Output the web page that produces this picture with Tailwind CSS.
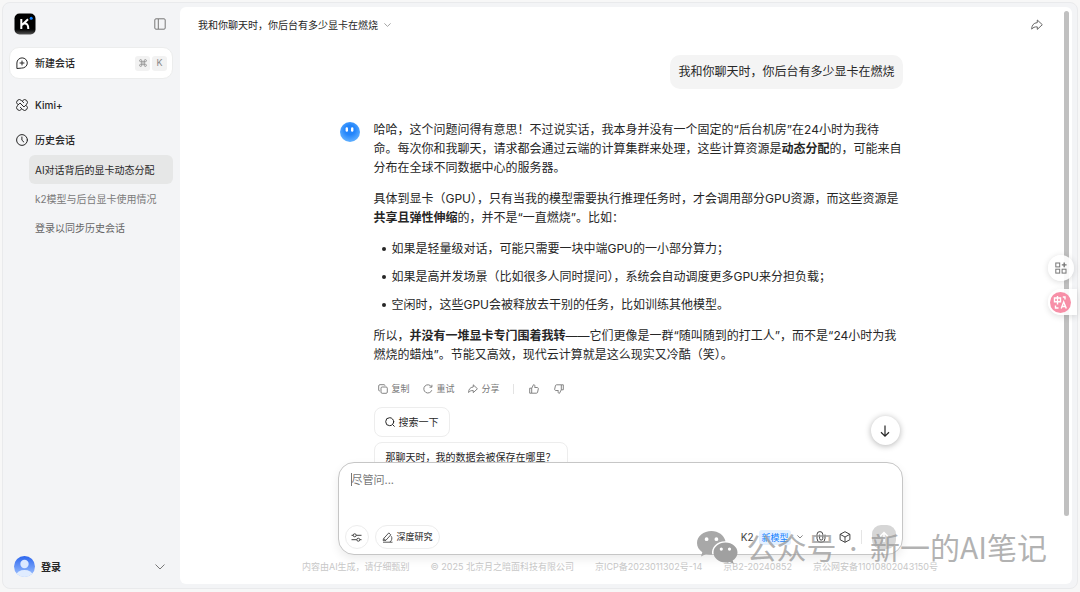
<!DOCTYPE html>
<html lang="zh-CN">
<head>
    <meta charset="UTF-8">
    <meta name="viewport" content="width=device-width, initial-scale=1.0">
    <title>Kimi</title>
    <script src="https://cdn.jsdelivr.net/npm/@tailwindcss/browser@4"></script>
</head>
<body class="h-screen overflow-hidden bg-[#f7f7f7] p-[2px] pb-[3px] font-['Inter','Noto_Sans_CJK_SC',sans-serif] text-[#262626]">
    <div class="relative flex h-full rounded-lg border border-[#e9eaec] bg-[#f3f4f6] pt-1 pb-1 pr-[5px]">

        <!-- Sidebar -->
        <aside class="flex w-[177px] shrink-0 flex-col pl-[6px] pr-[7px] pb-[7px] text-[10px] leading-4">
            <div class="flex items-center justify-between pl-[5px] pr-[7px] pt-[6px]">
                <a href="#" aria-label="Kimi">
                    <svg class="size-[22px]" viewBox="0 0 22 22">
                        <defs>
                            <linearGradient id="logo-bg" x1="0" y1="0" x2="0" y2="1"><stop offset="0.75" stop-color="#000"/><stop offset="1" stop-color="#555"/></linearGradient>
                        </defs>
                        <rect x="0.5" y="0.5" width="21" height="21" rx="5" fill="url(#logo-bg)"/>
                        <path d="M7.3 6v10M14 6.3L8 12M10 10.6c2.6-.4 4.3.8 4.3 5.4" fill="none" stroke="#fff" stroke-width="2"/>
                        <circle cx="17.2" cy="5.2" r="1.5" fill="#1783ff"/>
                    </svg>
                </a>
                <button aria-label="收起侧边栏">
                    <svg class="size-3 text-[#777]" viewBox="0 0 12 12" fill="none" stroke="currentColor"><rect x="0.8" y="0.8" width="10.4" height="10.4" rx="1.2"/><path d="M4.3 1v10"/></svg>
                </button>
            </div>

            <button class="mt-[12px] flex h-8 items-center rounded-[10px] border border-[#eceded] bg-white pl-[6px] pr-[5px] font-medium">
                <svg class="mr-[7px] size-3" viewBox="0 0 12 12" fill="none" stroke="currentColor" stroke-linecap="round" stroke-linejoin="round"><path d="M.9 11.1V6A5.2 5.1 0 1 1 6 11.1zM6 4v4M4 6h4"/></svg>
                新建会话
                <span class="ml-auto flex gap-[2px] text-[9px] font-normal text-[#888]">
                    <kbd class="flex h-[15px] w-[15px] items-center justify-center rounded-[3px] bg-[#f2f2f2]">
                        <svg class="size-2" viewBox="0 0 8 8" fill="none" stroke="currentColor" stroke-width="0.8"><path d="M2.8 2.8H1.7a1.1 1.1 0 1 1 1.1-1.1v4.6a1.1 1.1 0 1 1-1.1-1.1h4.6a1.1 1.1 0 1 1-1.1 1.1V1.7a1.1 1.1 0 1 1 1.1 1.1z"/></svg>
                    </kbd>
                    <kbd class="flex h-[15px] w-[15px] items-center justify-center rounded-[3px] bg-[#f2f2f2] font-['Inter',sans-serif]">K</kbd>
                </span>
            </button>

            <a href="#" class="mt-[18px] flex items-center pl-[7px] font-medium">
                <svg class="mr-[7px] size-3" viewBox="0 0 12 12" fill="none" stroke="currentColor" stroke-linecap="round" stroke-linejoin="round"><path d="M4.300 4.300L6 6M7.700 7.700L6 6M1.400 5.300A2.700 2.700 0 1 1 5.300 1.400L7.600 3.600M6.700 1.400A2.700 2.700 0 1 1 10.600 5.300L8.400 7.600M10.600 6.700A2.700 2.700 0 1 1 6.700 10.600L4.400 8.400M5.300 10.600A2.700 2.700 0 1 1 1.400 6.700L3.600 4.400"/></svg>
                Kimi+
            </a>
            <a href="#" class="mt-[19px] flex items-center pl-[7px] font-medium">
                <svg class="mr-[7px] size-3" viewBox="0 0 12 12" fill="none" stroke="currentColor" stroke-linecap="round" stroke-linejoin="round"><circle cx="6" cy="6" r="5.4"/><path d="M5.9 3v3.2L7.8 8"/></svg>
                历史会话
            </a>
            <nav class="mt-[7px] flex flex-col pl-5 text-[#666]">
                <a href="#" class="flex h-[29px] items-center rounded-md bg-[#e6e7e7] px-[6px] text-[#262626]">AI对话背后的显卡动态分配</a>
                <a href="#" class="flex h-[29px] items-center px-[6px] text-[#7a7a7a]">k2模型与后台显卡使用情况</a>
                <a href="#" class="flex h-[29px] items-center px-[6px]">登录以同步历史会话</a>
            </nav>

            <button class="mt-auto flex items-center pl-[5px] pr-[8px] font-bold">
                <svg class="mr-[6px] size-[21px]" viewBox="0 0 21 21">
                    <defs>
                        <linearGradient id="avatar-bg" x1="0" y1="0" x2="0" y2="1"><stop offset="0" stop-color="#2c66ee"/><stop offset="1" stop-color="#a4c6ff"/></linearGradient>
                        <clipPath id="avatar-clip"><circle cx="10.5" cy="10.5" r="10.5"/></clipPath>
                    </defs>
                    <g clip-path="url(#avatar-clip)">
                        <rect width="21" height="21" fill="url(#avatar-bg)"/>
                        <circle cx="10.5" cy="8" r="4.2" fill="#dbe8ff"/>
                        <ellipse cx="10.5" cy="19" rx="8" ry="5" fill="#e0ecff"/>
                    </g>
                </svg>
                登录
                <svg class="ml-auto w-[10px] text-[#777]" viewBox="0 0 10 6" fill="none" stroke="currentColor" stroke-linecap="round" stroke-linejoin="round"><path d="M.8.8L5 5 9.200.8"/></svg>
            </button>
        </aside>

        <!-- Chat -->
        <main class="relative flex min-w-0 flex-1 flex-col rounded-md bg-white">
            <header class="flex h-9 shrink-0 items-center justify-between pl-[18px] pr-[29px]">
                <button class="flex items-center gap-[6px] text-[10px]">
                    我和你聊天时，你后台有多少显卡在燃烧
                    <svg class="w-[7px] text-[#999]" viewBox="0 0 7 4" fill="none" stroke="currentColor" stroke-width="0.9"><path d="M.4.4l3.100 3 3.100-3"/></svg>
                </button>
                <button aria-label="分享">
                    <svg class="size-3 text-[#666]" viewBox="0 0 12 12" fill="none" stroke="currentColor" stroke-linejoin="round"><path d="M6.300 1l5 4.700-5 4.700V7.900C3.800 7.600 2 8.500.700 10.200.700 6.500 2.500 3.900 6.300 3.600z"/></svg>
                </button>
            </header>

            <section class="min-h-0 flex-1 overflow-hidden pr-3 pt-3">
                <div class="mx-auto w-full max-w-[565px]">
                    <div class="ml-auto w-fit rounded-[10px] bg-[#f4f4f4] px-2 py-[7px] text-[12px] leading-5">我和你聊天时，你后台有多少显卡在燃烧</div>

                    <div class="mt-[31px] flex gap-[14px] pl-[2px]">
                        <svg class="mt-[2px] size-5 shrink-0" viewBox="0 0 20 20">
                            <defs>
                                <radialGradient id="bot-bg" cx="0.5" cy="0.4" r="0.6"><stop offset="0.4" stop-color="#2385fb"/><stop offset="1" stop-color="#62b1ff"/></radialGradient>
                            </defs>
                            <circle cx="10" cy="10" r="10" fill="url(#bot-bg)"/>
                            <rect x="5.600" y="5.300" width="2.400" height="4.400" rx="1.200" fill="#fff"/>
                            <rect x="11" y="5.300" width="2.400" height="4.400" rx="1.200" fill="#fff"/>
                        </svg>
                        <div class="min-w-0 flex-1">
                            <div class="flex flex-col gap-3 text-[12px] leading-[19px] whitespace-nowrap">
                                <p>哈哈，这个问题问得有意思！不过说实话，我本身并没有一个固定的“后台机房”在24小时为我待<br>命。每次你和我聊天，请求都会通过云端的计算集群来处理，这些计算资源是<strong>动态分配</strong>的，可能来自<br>分布在全球不同数据中心的服务器。</p>
                                <p>具体到显卡（GPU），只有当我的模型需要执行推理任务时，才会调用部分GPU资源，而这些资源是<br><strong>共享且弹性伸缩</strong>的，并不是“一直燃烧”。比如：</p>
                                <ul class="flex flex-col gap-[9px] pl-2">
                                    <li class="flex items-center gap-[6px] before:size-1 before:rounded-full before:bg-[#262626]">如果是轻量级对话，可能只需要一块中端GPU的一小部分算力；</li>
                                    <li class="flex items-center gap-[6px] before:size-1 before:rounded-full before:bg-[#262626]">如果是高并发场景（比如很多人同时提问），系统会自动调度更多GPU来分担负载；</li>
                                    <li class="flex items-center gap-[6px] before:size-1 before:rounded-full before:bg-[#262626]">空闲时，这些GPU会被释放去干别的任务，比如训练其他模型。</li>
                                </ul>
                                <p>所以，<strong>并没有一堆显卡专门围着我转</strong>——它们更像是一群“随叫随到的打工人”，而不是“24小时为我<br>燃烧的蜡烛”。节能又高效，现代云计算就是这么现实又冷酷（笑）。</p>
                            </div>

                            <div class="mt-[17px] flex h-4 items-center gap-[13px] pl-1 text-[9px] text-[#777]">
                                <button class="flex items-center gap-1">
                                    <svg class="size-[10px]" viewBox="0 0 10 10" fill="none" stroke="currentColor" stroke-width="0.9"><rect x="3" y="3" width="6.300" height="6.300" rx="1.200"/><path d="M1.800 7A1 1 0 0 1 .7 6V2A1.300 1.300 0 0 1 2 .7h4A1 1 0 0 1 7 1.700"/></svg>
                                    复制
                                </button>
                                <button class="flex items-center gap-1">
                                    <svg class="size-[10px]" viewBox="0 0 10 10" fill="none" stroke="currentColor" stroke-width="0.9"><path d="M8.800 6.200A4.100 4.100 0 1 1 8.500 2.900M8.900.8v2.400H6.500"/></svg>
                                    重试
                                </button>
                                <button class="flex items-center gap-1">
                                    <svg class="size-[10px]" viewBox="0 0 12 12" fill="none" stroke="currentColor" stroke-width="1.1" stroke-linejoin="round"><path d="M6.300 1l5 4.700-5 4.700V7.900C3.800 7.600 2 8.500.700 10.200.700 6.500 2.500 3.900 6.300 3.600z"/></svg>
                                    分享
                                </button>
                                <span class="h-[10px] w-px bg-[#e3e3e3]"></span>
                                <button aria-label="赞">
                                    <svg class="mx-[2px] size-[10px]" viewBox="0 0 10 10" fill="none" stroke="currentColor" stroke-width="0.9" stroke-linejoin="round"><path d="M.7 4.200h2V9.200h-2zM2.700 4.300L4.500.7c1 0 1.500.6 1.400 1.500L5.700 3.500h2.500c.8 0 1.300.6 1.100 1.400L8.600 8.200c-.1.600-.6 1-1.200 1H2.700"/></svg>
                                </button>
                                <button aria-label="踩">
                                    <svg class="size-[10px]" viewBox="0 0 10 10" fill="none" stroke="currentColor" stroke-width="0.9" stroke-linejoin="round"><path d="M9.300 5.800h-2V.8h2zM7.300 5.700L5.500 9.300c-1 0-1.500-.6-1.400-1.500l.2-1.300H1.800c-.8 0-1.300-.6-1.100-1.400l.7-3.300c.1-.6.6-1 1.200-1h4.700"/></svg>
                                </button>
                            </div>

                            <div class="mt-[10px] flex flex-col items-start gap-[5px] text-[10px]">
                                <button class="flex h-[30px] items-center gap-1 rounded-lg border border-[#ededed] px-[10px]">
                                    <svg class="size-[10px]" viewBox="0 0 10 10" fill="none" stroke="currentColor" stroke-linecap="round"><circle cx="4.700" cy="4.700" r="4"/><path d="M7.600 7.600l1.700 1.700"/></svg>
                                    搜索一下
                                </button>
                                <button class="flex h-[30px] items-center rounded-lg border border-[#ededed] px-[11px]">那聊天时，我的数据会被保存在哪里？</button>
                            </div>
                        </div>
                    </div>
                </div>
            </section>

            <div class="shrink-0 pr-3">
                <form class="relative mx-auto flex h-[93px] w-full max-w-[565px] flex-col rounded-[16px] border border-[#c6c6c6] bg-white px-[6px] pt-2 pb-[5px] shadow-[0_4px_10px_rgba(0,0,0,0.08)]">
                    <button type="button" aria-label="回到底部" class="absolute -top-[47px] right-[2px] flex size-[29px] items-center justify-center rounded-full bg-white shadow-[0_1px_6px_rgba(0,0,0,0.3)]">
                        <svg class="h-3 w-[10px]" viewBox="0 0 10 12" fill="none" stroke="currentColor" stroke-width="1.200"><path d="M5 .5v10.500M1 7.200l4 3.900 4-3.900"/></svg>
                    </button>
                    <div class="flex flex-1 items-start pl-[6px]">
                        <span class="mt-[2px] h-[13px] w-px bg-[#777]"></span>
                        <textarea aria-label="尽管问" placeholder="尽管问..." class="h-[18px] flex-1 resize-none overflow-hidden text-[11px] leading-[18px] outline-none placeholder:text-[#777]"></textarea>
                    </div>
                    <div class="flex items-center gap-[6px] text-[9px] text-[#444]">
                        <button type="button" aria-label="设置" class="flex size-6 items-center justify-center rounded-full border border-[#ededed]">
                            <svg class="size-[11px]" viewBox="0 0 11 11" fill="none" stroke="currentColor"><path d="M.5 3.300h1.700M5.200 3.300h5.300M.5 7.700h5.300M8.800 7.700h1.700"/><circle cx="3.700" cy="3.300" r="1.500"/><circle cx="7.300" cy="7.700" r="1.500"/></svg>
                        </button>
                        <button type="button" class="flex h-6 items-center gap-1 rounded-full border border-[#ededed] px-[6px] font-medium">
                            <svg class="size-[11px]" viewBox="0 0 11 11" fill="none" stroke="currentColor" stroke-width="0.9" stroke-linejoin="round"><path d="M1.700 6.500L6.800.9l2 1.900-5 5.600zM1.700 6.500L1 8.300l2.800.1M9.200 4.200c1.300 1.900.7 4.300-1.400 5.900M1 10.200h9.500"/></svg>
                            深度研究
                        </button>
                        <button type="button" class="ml-auto flex items-center gap-[6px]">
                            <span class="text-[10px]">K2</span>
                            <span class="rounded-[3px] bg-[#e3f0ff] px-[2px] leading-[15px] text-[#1783ff]">新模型</span>
                            <svg class="w-[6px] text-[#888]" viewBox="0 0 6 4" fill="none" stroke="currentColor"><path d="M.4.4L3 3 5.600.4"/></svg>
                        </button>
                        <button type="button" aria-label="附件" class="ml-[6px]">
                            <svg class="size-3" viewBox="0 0 12 12" fill="none" stroke="currentColor" stroke-linecap="round"><path d="M10 4v3.500a4 4 0 0 1-8 0v-4a2.800 2.800 0 0 1 5.800 0v4a1.600 1.600 0 0 1-3.200 0V4"/></svg>
                        </button>
                        <button type="button" aria-label="工具" class="ml-[6px]">
                            <svg class="size-3" viewBox="0 0 12 12" fill="none" stroke="currentColor" stroke-linejoin="round"><path d="M6 .7l4.900 2.600v5.400L6 11.300 1.100 8.700V3.300zM1.100 3.300L6 6l4.900-2.700M6 6v5.300"/></svg>
                        </button>
                        <span class="ml-[4px] h-[14px] w-px bg-[#e5e5e5]"></span>
                        <button type="button" aria-label="发送" class="ml-[4px] flex size-6 items-center justify-center rounded-[9px] bg-[#d6d6d6] text-white">
                            <svg class="size-3" viewBox="0 0 12 12" fill="none" stroke="currentColor" stroke-width="1.500"><path d="M6 11V1.500M2 5.500l4-4 4 4"/></svg>
                        </button>
                    </div>
                </form>
                <footer class="flex h-[29px] justify-center gap-[21px] pt-1 text-[9px] leading-4 whitespace-nowrap text-[#c8c8c8]">
                    <span>内容由AI生成，请仔细甄别</span>
                    <span>© 2025 北京月之暗面科技有限公司</span>
                    <a href="#">京ICP备2023011302号-14</a>
                    <a href="#">京B2-20240852</a>
                    <a href="#">京公网安备11010802043150号</a>
                </footer>
            </div>

            <!-- Scroll thumb -->
            <div class="absolute top-1 right-[3px] bottom-[68px] w-[5px] rounded-full bg-[#c0c0c0]"></div>
        </main>
    </div>

    <!-- Floating tools -->
    <div class="absolute top-[255px] right-[6px] flex size-[26px] items-center justify-center rounded-full bg-white/90 shadow-[0_1px_6px_rgba(0,0,0,0.15)]">
        <button aria-label="应用">
            <svg class="size-3 text-[#777]" viewBox="0 0 12 12" fill="none" stroke="currentColor"><rect x="0.800" y="1" width="3.900" height="3.900"/><rect x="0.800" y="7.200" width="3.900" height="3.900"/><rect x="7.100" y="7.200" width="3.900" height="3.900"/><path d="M9.200.5v4.800M6.800 2.900h4.800" stroke-width="1.400"/></svg>
        </button>
    </div>
    <div class="absolute top-[289px] right-[3px] flex h-[26px] w-[29px] items-center rounded-l-full bg-white/90 pl-[2px] shadow-[0_2px_6px_rgba(0,0,0,0.12)]">
        <button aria-label="翻译">
            <svg class="size-[21px]" viewBox="0 0 21 21" fill="none" stroke="#fff" stroke-width="1.400"><circle cx="10.500" cy="10.500" r="10.500" fill="#f78fa7" stroke="none"/><path d="M4.500 6h6v3.800h-6zM7.500 4v8.500M11.200 16.500l2.500-6.500 2.600 6.500M12.200 14.500h3.200M12.800 5h2.200v2.500M5.500 13.500V16h3"/></svg>
        </button>
    </div>

    <!-- Account watermark -->
    <div class="pointer-events-none absolute right-[33px] bottom-6 flex items-center gap-2 text-[#999]/75">
        <svg class="h-[34px] w-[41px]" viewBox="0 0 41 34">
            <path fill="#a8a8a8" fill-rule="evenodd" d="M14.500 1C6.500 1 0 6.300 0 13c0 3.800 2 7 5.300 9.200L4 26.500l5-2.600c2 .6 4 .9 6.200.8-1.500-7.700 5-13.700 13.300-13.500C27 5.200 21.300 1 14.500 1zM9.600 7.300a1.900 1.900 0 1 1 0 3.800 1.900 1.900 0 0 1 0-3.800zm9.800 0a1.900 1.900 0 1 1 0 3.800 1.900 1.900 0 0 1 0-3.800z"/>
            <path fill="#a0a0a0" fill-rule="evenodd" d="M28.500 12.500c-6.700 0-12 4.500-12 10s5.300 10 12 10c1.500 0 3-.2 4.300-.6l4 2-1.100-3.400c3-1.800 4.800-4.700 4.800-8 0-5.500-5.300-10-12-10zM24.300 17.500a1.600 1.600 0 1 1 0 3.200 1.600 1.600 0 0 1 0-3.200zm8.200 0a1.600 1.600 0 1 1 0 3.200 1.600 1.600 0 0 1 0-3.200z"/>
        </svg>
        <span class="font-['Noto_Sans_CJK_SC',sans-serif] text-[30px] leading-[40px] whitespace-nowrap">公众号<span class="px-1 font-['Inter',sans-serif]"> · </span>新一的AI笔记</span>
    </div>
</body>
</html>
